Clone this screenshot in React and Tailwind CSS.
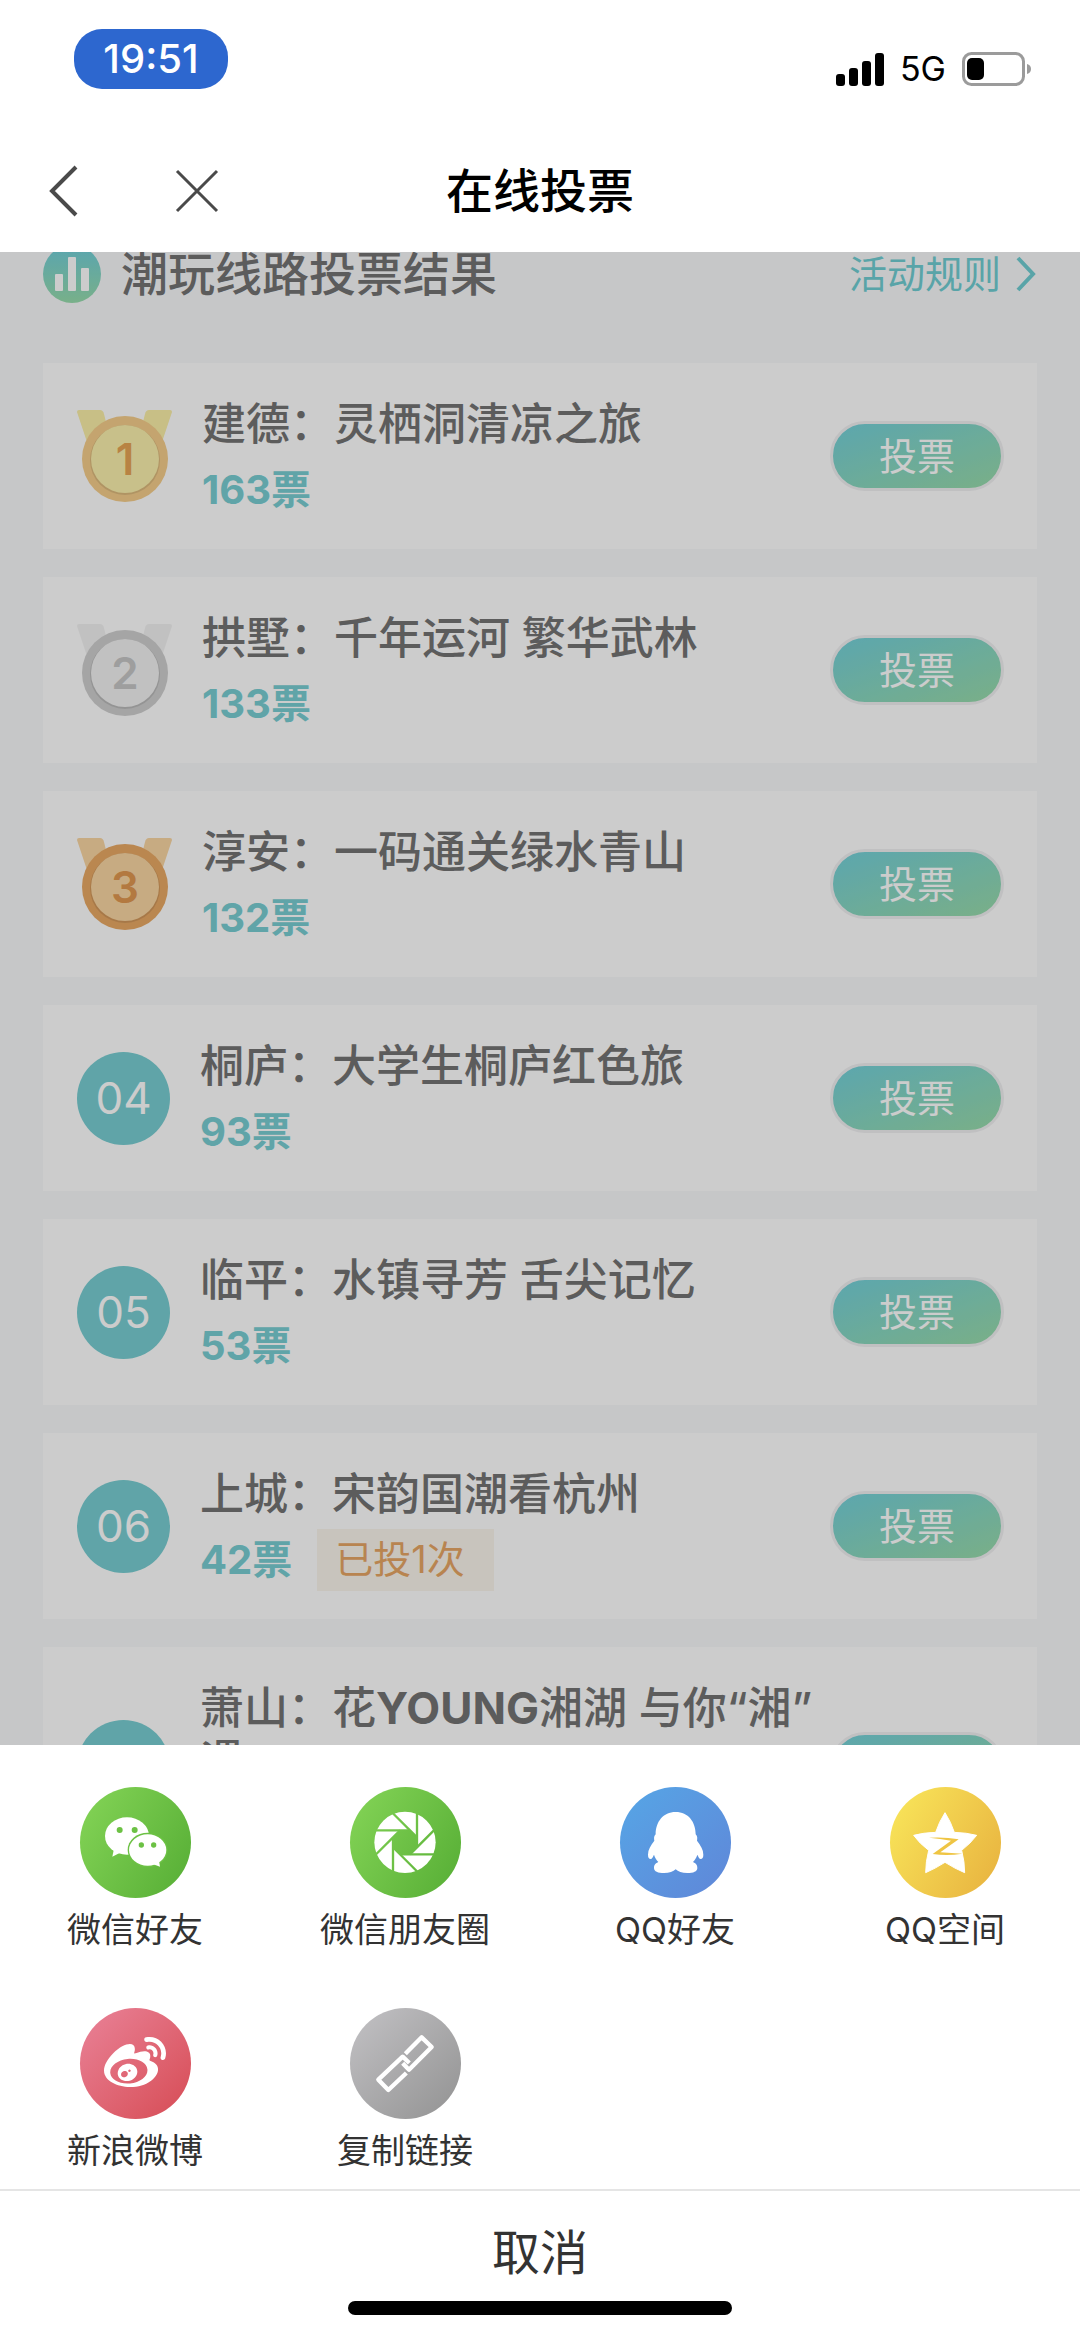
import React, { useState } from "react";
import { FaWeibo } from "react-icons/fa";

const routes = [
  { rank: 1, name: "建德：灵栖洞清凉之旅", votes: 163 },
  { rank: 2, name: "拱墅：千年运河 繁华武林", votes: 133 },
  { rank: 3, name: "淳安：一码通关绿水青山", votes: 132 },
  { rank: 4, name: "桐庐：大学生桐庐红色旅", votes: 93 },
  { rank: 5, name: "临平：水镇寻芳 舌尖记忆", votes: 53 },
  { rank: 6, name: "上城：宋韵国潮看杭州", votes: 42, voted: 1 },
  {
    rank: 7,
    name: (
      <>
        萧山：花<b>YOUNG</b>湘湖 与<wbr />你“湘”
        <wbr />遇
      </>
    ),
    votes: 36,
  },
];

const medalColors = {
  1: { ribbon: "#faefa8", ring: "#f5ce8b", inner: "#faf0ad", digit: "#e7a454" },
  2: { ribbon: "#f2f2f2", ring: "#cfcfcf", inner: "#f2f2f2", digit: "#c6c6c6" },
  3: { ribbon: "#f9d6a3", ring: "#e9a965", inner: "#f9d6a3", digit: "#e09850" },
};

const Medal = ({ rank }) => {
  const c = medalColors[rank];
  return (
    <svg viewBox="0 0 95 93" className="w-[95px] h-[93px] shrink-0">
      <path d="M2 0H23Q26 0 27 4L32 24L12 38L0 2Q0 0 2 0Z" fill={c.ribbon} />
      <path d="M93 0H72Q69 0 68 4L63 24L83 38L95 2Q95 0 93 0Z" fill={c.ribbon} />
      <circle cx="48" cy="49" r="43" fill={c.ring} />
      <circle cx="48" cy="50" r="35" fill="#000" opacity="0.1" />
      <circle cx="48" cy="49" r="34" fill={c.inner} />
      <text
        x="48"
        y="65"
        textAnchor="middle"
        fill={c.digit}
        className="font-['Inter'] text-[44px] font-semibold"
      >
        {rank}
      </text>
    </svg>
  );
};

const RankCircle = ({ rank }) => (
  <div className="w-[93px] h-[93px] shrink-0 rounded-full bg-[#78ced2] flex items-center justify-center text-white text-[44px] leading-none">
    {String(rank).padStart(2, "0")}
  </div>
);

const RouteCard = ({ route }) => (
  <li className="flex items-center bg-white pl-[34px] pr-[33px] py-[33px]">
    {route.rank <= 3 ? (
      <Medal rank={route.rank} />
    ) : (
      <RankCircle rank={route.rank} />
    )}
    <div className="flex-1 min-w-0 self-start ml-[30px] pt-[2px]">
      <h2 className="text-[44px] leading-[53px] font-medium text-[#737373]">
        {route.name}
      </h2>
      <div className="flex items-center h-[53px] mt-3">
        <span className="text-[40px] leading-[53px] font-bold text-[#78ced2]">
          {route.votes}票
        </span>
        {route.voted && (
          <span className="ml-[25px] pl-[18px] pr-[29px] h-[62px] flex items-center bg-[#fbf5ed] text-[38px] text-[#e7a664]">
            已投{route.voted}次
          </span>
        )}
      </div>
    </div>
    <button className="w-[174px] h-[70px] shrink-0 rounded-full border-3 border-[#f0f0f2] bg-[linear-gradient(160deg,#72d0dc,#9adca8)] bg-origin-border text-white text-[38px] leading-none">
      投票
    </button>
  </li>
);

const WechatIcon = () => (
  <svg viewBox="0 0 333 333" className="w-full h-full">
    <ellipse cx="141" cy="147" rx="66" ry="56" fill="#fff" />
    <path d="M102 185L97 209L123 196Z" fill="#fff" />
    <ellipse cx="203" cy="189" rx="60" ry="52" fill="#6cc144" />
    <ellipse cx="203" cy="189" rx="56" ry="47" fill="#fff" />
    <path d="M216 230L240 239L236 215Z" fill="#fff" />
    <g fill="#6cc144">
      <circle cx="119" cy="129" r="9" />
      <circle cx="164" cy="129" r="9" />
      <circle cx="184" cy="174" r="8" />
      <circle cx="221" cy="174" r="8" />
    </g>
  </svg>
);

const MomentsIcon = () => (
  <svg viewBox="0 0 333 333" className="w-full h-full">
    <mask id="aperture">
      <circle cx="165" cy="166" r="92" fill="#fff" />
      <g transform="translate(165 166)">
        <path d="M36 15L15 36H-15L-36 15V-15L-15 -36H15L36 -15Z" fill="#000" />
        {[0, 45, 90, 135, 180, 225, 270, 315].map((angle) => (
          <path
            key={angle}
            d="M36 15V-95"
            transform={`rotate(${angle})`}
            stroke="#000"
            strokeWidth="7"
          />
        ))}
      </g>
    </mask>
    <rect width="333" height="333" fill="#fff" mask="url(#aperture)" />
  </svg>
);

const QQIcon = () => (
  <svg viewBox="0 0 333 333" className="w-full h-full">
    <path
      fill="#fff"
      d="M167 75C129 75 107 105 107 142C101 148 102 154 103 161C92 175 84 188 84 203C84 212 87 216 92 216C96 216 99 209 102 203C105 212 109 219 115 225C104 230 102 236 102 243C102 254 114 258 132 258C148 258 160 254 167 247C174 254 186 258 202 258C220 258 232 254 232 243C232 236 230 230 219 225C225 219 229 212 232 203C235 209 238 216 242 216C247 216 250 212 250 203C250 188 242 175 231 161C232 154 233 148 227 142C227 105 205 75 167 75Z"
    />
  </svg>
);

const QzoneIcon = () => (
  <svg viewBox="0 0 333 333" className="w-full h-full">
    <path
      fill="#fff"
      stroke="#fff"
      strokeWidth="3"
      strokeLinejoin="round"
      d="M165 77Q183 105 193 136Q230 137 260 145Q242 169 215 190Q224 225 224 257Q195 245 165 226Q135 245 107 257Q107 225 116 190Q88 169 71 145Q100 137 137 136Q147 105 165 77Z"
    />
    <path
      fill="#efc544"
      d="M117 152Q165 149 206 157L151 196Q185 199 217 200Q172 208 128 201L183 161Q150 155 117 152Z"
    />
  </svg>
);

const LinkIcon = () => (
  <svg
    viewBox="0 0 333 333"
    className="w-full h-full"
    fill="none"
    stroke="#fff"
    strokeWidth="13"
    strokeLinejoin="round"
  >
    <path d="M166 137L215 88L245 117L177 185L158 166" />
    <path d="M169 195L115 246L85 215L158 146L178 165" />
  </svg>
);

const shareItems = [
  { label: "微信好友", bg: "bg-linear-120 from-[#85d557] to-[#55ad34]", icon: <WechatIcon /> },
  { label: "微信朋友圈", bg: "bg-linear-120 from-[#85d557] to-[#55ad34]", icon: <MomentsIcon /> },
  { label: "QQ好友", bg: "bg-linear-135 from-[#55a6e6] to-[#5f86d8]", icon: <QQIcon /> },
  { label: "QQ空间", bg: "bg-linear-120 from-[#f9e85b] to-[#e7b03e]", icon: <QzoneIcon /> },
  { label: "新浪微博", bg: "bg-linear-135 from-[#e98298] to-[#d64a54]", icon: <FaWeibo className="w-[62px] h-[62px] text-white" /> },
  { label: "复制链接", bg: "bg-linear-135 from-[#c3c2c5] to-[#929292]", icon: <LinkIcon /> },
];

const StatusBar = () => (
  <div className="flex items-start justify-between pl-[74px] pr-[48px] pt-[29px] h-[130px]">
    <div className="w-[154px] h-[60px] rounded-[28px] bg-[#2d67cf] text-white text-[40px] leading-none font-medium flex items-center justify-center">
      19:51
    </div>
    <div className="flex items-center gap-4 mt-[23px] h-[34px]">
      <svg viewBox="0 0 48 33" className="w-[48px] h-[33px]">
        <rect x="0" y="21" width="9" height="12" rx="3" />
        <rect x="13" y="15" width="9" height="18" rx="3" />
        <rect x="26" y="8" width="9" height="25" rx="3" />
        <rect x="39" y="0" width="9" height="33" rx="3" />
      </svg>
      <span className="text-[34px] leading-none text-black">5G</span>
      <svg viewBox="0 0 70 34" className="w-[70px] h-[34px]">
        <rect x="1.5" y="1.5" width="60" height="31" rx="8" fill="#fff" stroke="#9b9b9b" strokeWidth="3" />
        <rect x="5" y="6" width="17" height="22" rx="5" />
        <path d="M65 12Q69 13 69 17T65 22Z" fill="#9b9b9b" />
      </svg>
    </div>
  </div>
);

const NavBar = () => (
  <div className="grid grid-cols-3 items-center px-[44px] h-[122px]">
    <div className="flex items-center gap-[90px]">
      <button aria-label="返回">
        <svg viewBox="0 0 40 52" className="w-[40px] h-[52px]" fill="none" stroke="#4a4a4a" strokeWidth="4">
          <path d="M32 2L8 26L32 50" />
        </svg>
      </button>
      <button aria-label="关闭">
        <svg viewBox="0 0 46 46" className="w-[46px] h-[46px]" fill="none" stroke="#4a4a4a" strokeWidth="3">
          <path d="M3 3L43 43M43 3L3 43" />
        </svg>
      </button>
    </div>
    <h1 className="text-center text-[47px] leading-[60px] font-medium text-black">
      在线投票
    </h1>
  </div>
);

const App = () => {
  const [open, setOpen] = useState(true);

  return (
    <div className="h-screen flex flex-col bg-white font-['Inter','Noto_Sans_CJK_SC',sans-serif]">
      <header className="shrink-0">
        <StatusBar />
        <NavBar />
      </header>

      <main className="relative flex-1 min-h-0 overflow-hidden bg-[#f8f9fb]">
        <div className="-mt-2 px-[43px]">
          <div className="flex items-center h-[60px] mb-[59px]">
            <svg viewBox="0 0 58 58" className="w-[58px] h-[58px]">
              <defs>
                <linearGradient id="chart" x1="0" y1="0" x2="0" y2="1">
                  <stop offset="0" stopColor="#70cfdc" />
                  <stop offset="1" stopColor="#97dcac" />
                </linearGradient>
              </defs>
              <circle cx="29" cy="29" r="29" fill="url(#chart)" />
              <g fill="#fff">
                <rect x="12" y="29" width="8" height="17" rx="1" />
                <rect x="25" y="12" width="8" height="34" rx="1" />
                <rect x="38" y="23" width="8" height="23" rx="1" />
              </g>
            </svg>
            <h2 className="ml-5 text-[47px] leading-[42px] font-medium text-[#737373]">
              潮玩线路投票结果
            </h2>
            <a
              href="#rules"
              className="ml-auto flex items-center gap-[14px] text-[38px] leading-[42px] text-[#70ced2]"
            >
              活动规则
              <svg viewBox="0 0 22 36" className="w-[22px] h-[36px]" fill="none" stroke="currentColor" strokeWidth="4">
                <path d="M3 2L18 18L3 34" />
              </svg>
            </a>
          </div>

          <ul className="flex flex-col gap-7">
            {routes.map((route) => (
              <RouteCard key={route.rank} route={route} />
            ))}
          </ul>
        </div>
        {open && <div className="absolute inset-0 bg-black/20" />}
      </main>

      {/* Share sheet */}
      {open && (
        <section className="shrink-0 bg-white text-[#333]">
          <div className="grid grid-cols-4 gap-y-[54px] pt-[42px] pb-[14px]">
            {shareItems.map((item) => (
              <button key={item.label} className="flex flex-col items-center gap-2">
                <span
                  className={`w-[111px] h-[111px] rounded-full flex items-center justify-center ${item.bg}`}
                >
                  {item.icon}
                </span>
                <span className="text-[34px] leading-[48px]">{item.label}</span>
              </button>
            ))}
          </div>
          <div className="border-t-2 border-[#e5e5e5] flex flex-col items-center pb-[22px]">
            <button
              onClick={() => setOpen(false)}
              className="w-full h-[110px] pt-[14px] text-[48px] leading-none"
            >
              取消
            </button>
            <div className="w-[384px] h-[14px] rounded-full bg-black" />
          </div>
        </section>
      )}
    </div>
  );
};

export default App;
